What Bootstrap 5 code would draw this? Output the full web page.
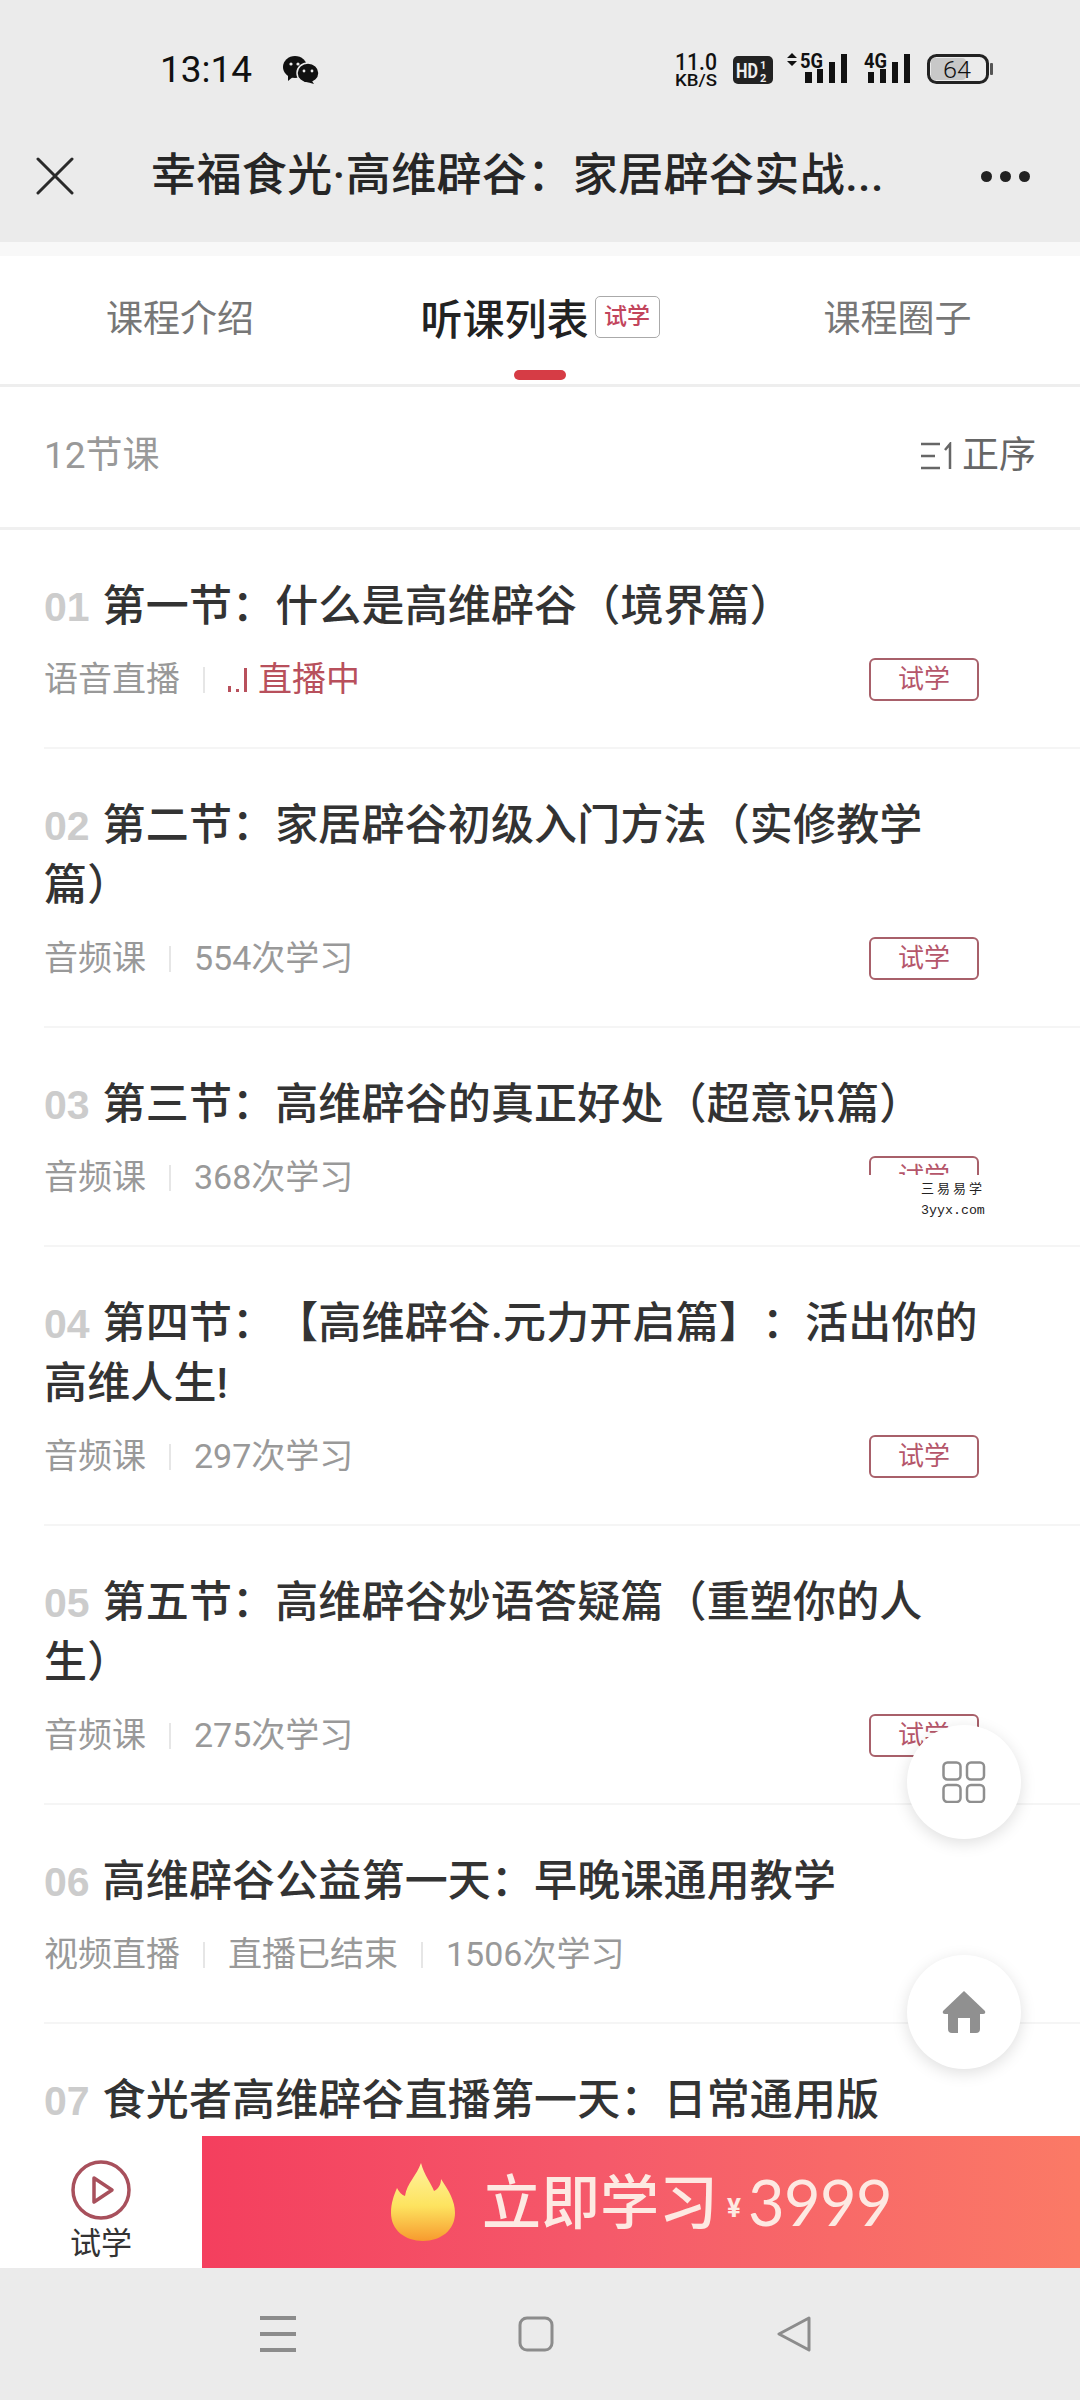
<!DOCTYPE html>
<html lang="zh-CN">

<head>
    <meta charset="UTF-8">
    <meta name="viewport" content="width=device-width, initial-scale=1.0">
    <title>听课列表</title>
    <link href="https://cdn.jsdelivr.net/npm/bootstrap@5.3.2/dist/css/bootstrap.min.css" rel="stylesheet">
    <style>
        body { width: 1080px; height: 2400px; overflow: hidden; background: #fff; color: #333; font-family: Roboto, "Noto Sans CJK SC", sans-serif; text-spacing-trim: space-all; }
        .page-wrap { width: 1080px; height: 2400px; position: relative; }

        /* top gray area */
        .status-row { height: 110px; padding: 40px 87px 10px 160px; background: #ebebeb; color: #111; }
        .status-time { font-size: 37px; line-height: 40px; width: 123px; }
        .top-row { height: 132px; background: #ebebeb; padding: 0 50px 0 36px; }
        .top-title { font-size: 45px; font-weight: 500; line-height: 60px; margin-left: 77px; color: #262626; letter-spacing: .4px; white-space: nowrap; }
        .top-dot { width: 11px; height: 11px; border-radius: 50%; background: #222; }
        .top-strip { height: 14px; background: #f8f8f8; }

        /* tabs */
        .tab-row { height: 131px; border-bottom: 3px solid #eee; }
        .tab-item { width: 360px; padding-top: 39px; font-size: 37px; line-height: 50px; color: #777; position: relative; }
        .tab-item:last-child { padding-right: 5px; }
        .tab-item.on { font-size: 42px; font-weight: 500; color: #222; padding-top: 40px; }
        .tab-bar { position: absolute; left: 154px; bottom: 4px; width: 52px; height: 10px; border-radius: 5px; background: #d63c45; }
        .tab-tag { margin-left: 6px; width: 65px; height: 42px; border: 1px solid #aaa; border-radius: 5px; font-size: 23px; font-weight: 500; line-height: 40px; color: #c2455c; text-align: center; }

        .count-row { height: 143px; padding: 0 44px 2px; border-bottom: 3px solid #f0f0f0; font-size: 37px; color: #999; }
        .sort-txt { color: #666; }

        /* lesson list */
        .lesson-box { height: 1606px; overflow: hidden; }
        .lesson { margin: 0 0 0 44px; padding: 46px 90px 45px 0; border-bottom: 2px solid #f5f5f5; }
        .lesson-title { font-size: 43px; line-height: 60px; font-weight: 500; color: #333; margin: 0 0 21px; letter-spacing: .15px; }
        .lesson-num { font-family: "Liberation Sans", sans-serif; font-weight: 700; font-size: 41px; line-height: 1; color: #ccc; margin-right: 13px; letter-spacing: 0; }
        .lesson-meta { height: 45px; font-size: 34px; color: #999; margin-right: 11px; }
        .meta-sep { width: 2px; height: 26px; background: #e6e6e6; margin: 0 23px; }
        .live-txt { color: #b8505c; margin-left: 10px; }
        .try-tag { width: 110px; height: 43px; border: 2px solid #a8606a; border-radius: 6px; font-size: 26px; line-height: 39px; color: #b5566a; text-align: center; }

        /* floating things */
        .float-btn { position: absolute; left: 907px; width: 114px; height: 114px; border-radius: 50%; background: #fff; box-shadow: 0 4px 16px rgba(0, 0, 0, .13); }
        .float-grid { top: 1725px; }
        .float-home { top: 1955px; }
        .water-mark { position: absolute; left: 823px; top: 1175px; width: 170px; height: 49px; background: #fff; padding: 3px 0 0 98px; color: #222; font-family: "Liberation Mono", monospace; font-size: 13.3px; line-height: 22px; white-space: nowrap; }
        .water-mark div:first-child { font-family: "Liberation Serif", "Noto Sans CJK SC", serif; letter-spacing: 3px; font-size: 13px; }

        /* bottom */
        .buy-row { height: 132px; background: #fff; }
        .try-side { width: 202px; font-size: 31px; line-height: 40px; color: #333; }
        .buy-btn { background: linear-gradient(90deg, #f43f5e 0%, #f5596a 45%, #fb7a66 100%); color: #fde9e2; padding-left: 189px; }
        .buy-txt { font-size: 59px; font-weight: 500; margin: 4px 0 0 27px; }
        .buy-yen { font-size: 26px; font-weight: 700; margin: 12px 7px 0 9px; }
        .buy-price { font-family: Lato, Roboto, sans-serif; font-size: 63px; font-weight: 400; letter-spacing: -.5px; }
        .nav-row { height: 132px; background: #ebebeb; padding: 0 0 0 260px; }
        .nav-gap { margin-left: 222px; }
    </style>
</head>

<body>
    <div class="page-wrap">
        <!-- status bar -->
        <div class="status-row d-flex align-items-center">
            <div class="status-time">13:14</div>
            <svg width="36" height="28" viewBox="0 0 36 28">
                <ellipse cx="12" cy="11" rx="12" ry="11" fill="#111" />
                <path d="M5 18 L5 25 L11 20 Z" fill="#111" />
                <ellipse cx="25" cy="17" rx="11" ry="10" fill="#111" stroke="#ebebeb" stroke-width="1.5" />
                <path d="M29 25 L31 28 L24 26 Z" fill="#111" />
                <circle cx="8" cy="8" r="1.6" fill="#ebebeb" />
                <circle cx="15" cy="8" r="1.6" fill="#ebebeb" />
                <circle cx="21" cy="15" r="1.4" fill="#ebebeb" />
                <circle cx="29" cy="15" r="1.4" fill="#ebebeb" />
            </svg>
            <svg class="ms-auto" width="318" height="40" viewBox="0 0 318 40" font-family="Roboto, sans-serif" fill="#111">
                <text x="0" y="20" font-size="23" font-weight="500" textLength="42" lengthAdjust="spacingAndGlyphs">11.0</text>
                <text x="0" y="36" font-size="16" font-weight="500" textLength="42" lengthAdjust="spacingAndGlyphs">KB/S</text>
                <rect x="58" y="6" width="40" height="28" rx="5" fill="#222" />
                <text x="61" y="28" font-size="20" font-weight="700" fill="#eee" textLength="22" lengthAdjust="spacingAndGlyphs">HD</text>
                <text x="85" y="19" font-size="11" font-weight="700" fill="#eee">1</text>
                <text x="85" y="32" font-size="11" font-weight="700" fill="#eee">2</text>
                <path d="M112 8 L122 8 L117 3 Z M112 11 L122 11 L117 16 Z" />
                <text x="125" y="18" font-size="20" font-weight="700" textLength="23" lengthAdjust="spacingAndGlyphs">5G</text>
                <rect x="130" y="22" width="7" height="11" /><rect x="142" y="19" width="6" height="14" /><rect x="154" y="12" width="6" height="21" /><rect x="166" y="4" width="6" height="29" />
                <text x="189" y="18" font-size="20" font-weight="700" textLength="23" lengthAdjust="spacingAndGlyphs">4G</text>
                <rect x="193" y="22" width="6" height="11" /><rect x="205" y="19" width="6" height="14" /><rect x="217" y="12" width="6" height="21" /><rect x="229" y="4" width="6" height="29" />
                <rect x="253.5" y="5.5" width="59" height="27" rx="8" fill="none" stroke="#222" stroke-width="3" />
                <rect x="256" y="8" width="35" height="22" rx="4" fill="#c8c8c8" />
                <rect x="315" y="13" width="3" height="12" rx="1" fill="#555" />
                <text x="268" y="28" font-size="24" font-weight="300" textLength="28" lengthAdjust="spacingAndGlyphs">64</text>
            </svg>
        </div>
        <div class="top-row d-flex align-items-center">
            <svg width="38" height="38" viewBox="0 0 38 38">
                <path d="M2 2 L36 36 M36 2 L2 36" stroke="#2a2a2a" stroke-width="3" stroke-linecap="round" fill="none" />
            </svg>
            <div class="top-title">幸福食光·高维辟谷：家居辟谷实战...</div>
            <div class="ms-auto d-flex gap-2">
                <span class="top-dot"></span><span class="top-dot"></span><span class="top-dot"></span>
            </div>
        </div>
        <div class="top-strip"></div>

        <!-- tabs -->
        <div class="tab-row d-flex text-center">
            <div class="tab-item">课程介绍</div>
            <div class="tab-item on d-flex justify-content-center">
                <span>听课列表</span><span class="tab-tag">试学</span>
                <span class="tab-bar"></span>
            </div>
            <div class="tab-item">课程圈子</div>
        </div>

        <div class="count-row d-flex align-items-center justify-content-between">
            <span>12节课</span>
            <span class="sort-txt d-flex align-items-center gap-2">
                <svg width="33" height="28" viewBox="0 0 33 28">
                    <path d="M0 2 H19 M0 14 H14 M0 26 H19 M29 27 V2 L24 8" stroke="#666" stroke-width="2.5" fill="none" />
                </svg>
                正序
            </span>
        </div>

        <!-- lessons -->
        <div class="lesson-box">
            <div class="lesson">
                <h6 class="lesson-title"><span class="lesson-num">01</span>第一节：什么是高维辟谷（境界篇）</h6>
                <div class="lesson-meta d-flex align-items-center">
                    <span>语音直播</span><span class="meta-sep"></span>
                    <svg width="20" height="28" viewBox="0 0 20 28">
                        <rect x="0" y="20" width="3" height="6" fill="#b8505c" /><rect x="16" y="2" width="3" height="24" fill="#b8505c" /><rect x="8" y="23" width="3" height="3" fill="#b8505c" />
                    </svg>
                    <span class="live-txt">直播中</span>
                    <span class="try-tag ms-auto">试学</span>
                </div>
            </div>
            <div class="lesson">
                <h6 class="lesson-title"><span class="lesson-num">02</span>第二节：家居辟谷初级入门方法（实修教学<br>篇）</h6>
                <div class="lesson-meta d-flex align-items-center">
                    <span>音频课</span><span class="meta-sep"></span><span>554次学习</span>
                    <span class="try-tag ms-auto">试学</span>
                </div>
            </div>
            <div class="lesson">
                <h6 class="lesson-title"><span class="lesson-num">03</span>第三节：高维辟谷的真正好处（超意识篇）</h6>
                <div class="lesson-meta d-flex align-items-center">
                    <span>音频课</span><span class="meta-sep"></span><span>368次学习</span>
                    <span class="try-tag ms-auto">试学</span>
                </div>
            </div>
            <div class="lesson">
                <h6 class="lesson-title"><span class="lesson-num">04</span>第四节：【高维辟谷.元力开启篇】：活出你的<br>高维人生!</h6>
                <div class="lesson-meta d-flex align-items-center">
                    <span>音频课</span><span class="meta-sep"></span><span>297次学习</span>
                    <span class="try-tag ms-auto">试学</span>
                </div>
            </div>
            <div class="lesson">
                <h6 class="lesson-title"><span class="lesson-num">05</span>第五节：高维辟谷妙语答疑篇（重塑你的人<br>生）</h6>
                <div class="lesson-meta d-flex align-items-center">
                    <span>音频课</span><span class="meta-sep"></span><span>275次学习</span>
                    <span class="try-tag ms-auto">试学</span>
                </div>
            </div>
            <div class="lesson">
                <h6 class="lesson-title"><span class="lesson-num">06</span>高维辟谷公益第一天：早晚课通用教学</h6>
                <div class="lesson-meta d-flex align-items-center">
                    <span>视频直播</span><span class="meta-sep"></span><span>直播已结束</span><span class="meta-sep"></span><span>1506次学习</span>
                </div>
            </div>
            <div class="lesson">
                <h6 class="lesson-title"><span class="lesson-num">07</span>食光者高维辟谷直播第一天：日常通用版</h6>
            </div>
        </div>

        <!-- bottom bar -->
        <div class="buy-row d-flex">
            <div class="try-side d-flex flex-column align-items-center justify-content-end">
                <svg width="60" height="60" viewBox="0 0 60 60">
                    <circle cx="30" cy="30" r="28" fill="none" stroke="#a8505c" stroke-width="3.5" />
                    <path d="M23 18 L41 30 L23 42 Z" fill="none" stroke="#a8505c" stroke-width="3.5" stroke-linejoin="round" />
                </svg>
                <div class="mt-1 mb-1">试学</div>
            </div>
            <div class="buy-btn flex-grow-1 d-flex align-items-center">
                <svg width="64" height="78" viewBox="0 0 64 78">
                    <defs>
                        <linearGradient id="flameFill" x1="0" y1="0" x2="0" y2="1">
                            <stop offset="0" stop-color="#fff3a0" />
                            <stop offset=".55" stop-color="#fde35f" />
                            <stop offset="1" stop-color="#f79a2e" />
                        </linearGradient>
                    </defs>
                    <path d="M30 0 C33 12 40 20 43 28 C47 26 50 22 50 16 C58 28 64 38 64 50 C64 67 50 78 32 78 C14 78 0 67 0 50 C0 40 3 32 6 25 C8 29 11 32 14 33 C16 20 26 12 30 0 Z" fill="url(#flameFill)" />
                </svg>
                <span class="buy-txt">立即学习</span>
                <span class="buy-yen">¥</span>
                <span class="buy-price">3999</span>
            </div>
        </div>
        <div class="nav-row d-flex align-items-center">
            <svg width="36" height="38" viewBox="0 0 36 38">
                <path d="M0 3 H36 M0 19 H36 M0 35 H36" stroke="#8c8c8c" stroke-width="4" fill="none" />
            </svg>
            <svg class="nav-gap" width="36" height="36" viewBox="0 0 36 36">
                <rect x="2" y="2" width="32" height="32" rx="7" fill="none" stroke="#8c8c8c" stroke-width="3" />
            </svg>
            <svg class="nav-gap" width="36" height="36" viewBox="0 0 36 36">
                <path d="M33 2 L3 18 L33 34 Z" fill="none" stroke="#8c8c8c" stroke-width="3" stroke-linejoin="round" />
            </svg>
        </div>

        <!-- overlays -->
        <div class="water-mark">
            <div>三易易学</div>
            <div>3yyx.com</div>
        </div>
        <div class="float-btn float-grid d-flex align-items-center justify-content-center">
            <svg width="44" height="42" viewBox="0 0 44 42" fill="none" stroke="#8f8f8f" stroke-width="2.5">
                <rect x="1.5" y="1.5" width="17" height="17" rx="4" /><rect x="25" y="1.5" width="17" height="17" rx="4" />
                <rect x="1.5" y="24" width="17" height="17" rx="4" /><rect x="25" y="24" width="17" height="17" rx="4" />
            </svg>
        </div>
        <div class="float-btn float-home d-flex align-items-center justify-content-center">
            <svg width="44" height="44" viewBox="0 0 44 44">
                <path d="M22 1 L43 21 Q44 24 41 24 H38 V39 Q38 43 34 43 H28 V28 H16 V43 H10 Q6 43 6 39 V24 H3 Q0 24 1 21 Z" fill="#909090" />
            </svg>
        </div>
    </div>

    <script src="https://cdn.jsdelivr.net/npm/bootstrap@5.3.2/dist/js/bootstrap.bundle.min.js"></script>
</body>

</html>
